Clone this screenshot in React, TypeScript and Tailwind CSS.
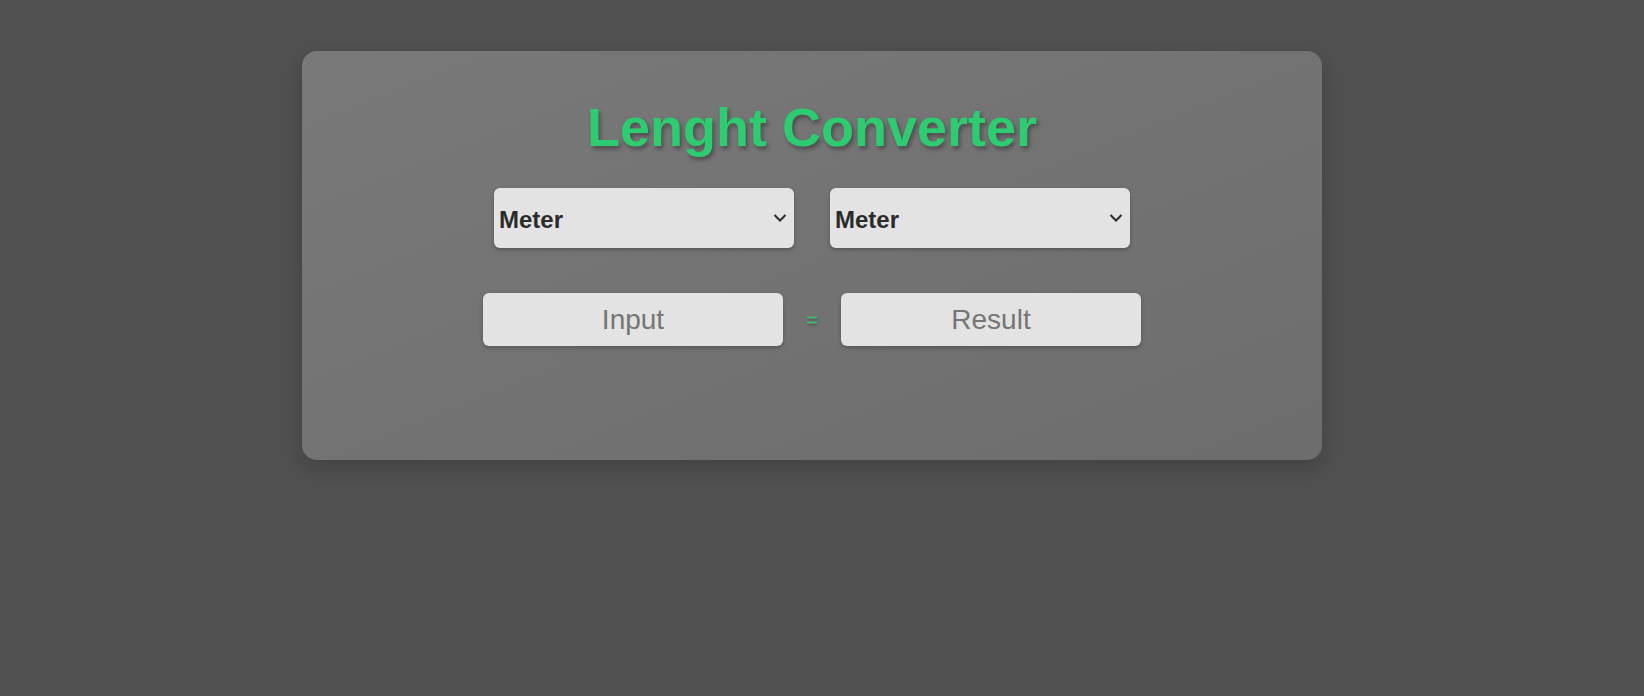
import React from "react";

function Chevron() {
  return (
    <svg width="14" height="9" viewBox="0 0 14 9" className="absolute right-[7px] top-1/2 -translate-y-1/2 pointer-events-none">
      <polyline points="1.5,1.5 7,7 12.5,1.5" fill="none" stroke="#2a2a2a" strokeWidth="2" />
    </svg>
  );
}

function UnitSelect() {
  return (
    <div className="relative w-[300px] h-[60px]">
      <select
        defaultValue="Meter"
        className="appearance-none w-full h-full rounded-[6px] bg-[#e3e3e3] pl-[5px] pr-8 pt-[4px] text-[24px] font-bold text-[#2b2b2b] shadow-[0_2px_4px_rgba(0,0,0,0.25)] outline-none"
        style={{ fontFamily: '"Liberation Sans", Arial, sans-serif' }}
      >
        <option>Meter</option>
        <option>Kilometer</option>
        <option>Centimeter</option>
      </select>
      <Chevron />
    </div>
  );
}

function Field({ placeholder }: { placeholder: string }) {
  return (
    <input
      type="text"
      placeholder={placeholder}
      className="w-[300px] h-[53px] rounded-[6px] bg-[#e3e3e3] text-center text-[28px] text-[#333] placeholder:text-[#757575] shadow-[0_2px_4px_rgba(0,0,0,0.25)] outline-none"
      style={{ fontFamily: '"Liberation Sans", Arial, sans-serif' }}
    />
  );
}

export default function App() {
  return (
    <div
      className="min-h-[696px] w-full bg-[#515151] pt-[51px] pl-[302px]"
      style={{ fontFamily: '"Liberation Sans", Arial, sans-serif' }}
    >
      <div className="w-[1020px] h-[409px] rounded-[15px] bg-linear-to-br from-[#797979] to-[#6d6d6d] shadow-[0_8px_24px_rgba(0,0,0,0.2)] flex flex-col items-center pt-[49px]">
        <h1 className="text-[54px] leading-[54px] font-bold text-[#2ecc71] [text-shadow:2px_3px_4px_rgba(0,0,0,0.35)]">
          Lenght Converter
        </h1>
        <div className="mt-[34px] flex gap-[36px]">
          <UnitSelect />
          <UnitSelect />
        </div>
        <div className="mt-[45px] flex items-center">
          <Field placeholder="Input" />
          <span className="w-[58px] text-center text-[20px] text-[#2ecc71] [text-shadow:1px_2px_3px_rgba(0,0,0,0.35)]">=</span>
          <Field placeholder="Result" />
        </div>
      </div>
    </div>
  );
}
